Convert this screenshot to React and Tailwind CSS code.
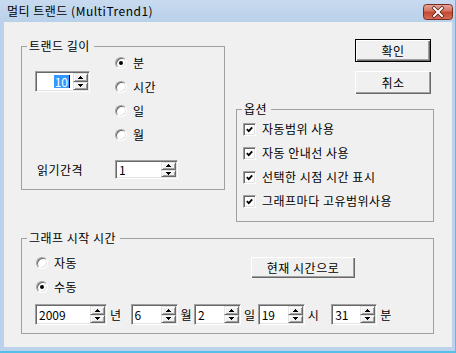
import React from "react";

const font = "font-['Noto_Sans_CJK_KR','Noto_Sans',sans-serif]";

// tiny pixel arrows for the up-down buttons
const Arrow = ({ up }) => (
  <svg width="5" height="3" shapeRendering="crispEdges">
    {up ? (
      <>
        <rect x="2" y="0" width="1" height="1" fill="#000" />
        <rect x="1" y="1" width="3" height="1" fill="#000" />
        <rect x="0" y="2" width="5" height="1" fill="#000" />
      </>
    ) : (
      <>
        <rect x="0" y="0" width="5" height="1" fill="#000" />
        <rect x="1" y="1" width="3" height="1" fill="#000" />
        <rect x="2" y="2" width="1" height="1" fill="#000" />
      </>
    )}
  </svg>
);

const SpinHalf = ({ up }) => (
  <div className="flex-1 flex items-center justify-center bg-[#f0f0f0] border border-t-[#e3e3e3] border-l-[#e3e3e3] border-b-[#696969] border-r-[#696969] shadow-[inset_1px_1px_0_#fff,inset_-1px_-1px_0_#a0a0a0]">
    <Arrow up={up} />
  </div>
);

const Spinner = ({ value, selected, className }) => (
  <div
    className={`flex bg-white border border-t-[#a0a0a0] border-l-[#a0a0a0] border-b-white border-r-white shadow-[inset_1px_1px_0_#696969,inset_-1px_-1px_0_#e3e3e3] p-px tracking-normal ${className}`}
  >
    {selected ? (
      <div className="flex-1 flex items-center justify-end pr-[3px] leading-[13px]">
        <span className="bg-[#3399ff] text-white px-px">{value}</span>
        <span className="w-px h-[13px] bg-black" />
      </div>
    ) : (
      <div className="flex-1 flex items-center pl-[2px] leading-none">{value}</div>
    )}
    <div className="flex flex-col w-[15px]">
      <SpinHalf up />
      <SpinHalf />
    </div>
  </div>
);

const Radio = ({ checked, label }) => (
  <div className="flex items-center h-[20px]">
    <span className="flex items-center justify-center w-[12px] h-[12px] rounded-full bg-white border border-t-[#a0a0a0] border-l-[#a0a0a0] border-b-white border-r-white shadow-[inset_1px_1px_0_#696969,inset_-1px_-1px_0_#e3e3e3]">
      {checked && <span className="w-[4px] h-[4px] rounded-full bg-black" />}
    </span>
    <span className="ml-[6px] leading-none">{label}</span>
  </div>
);

const Check = ({ label }) => (
  <div className="flex items-center h-[20px]">
    <span className="flex items-center justify-center w-[13px] h-[13px] bg-white border border-t-[#a0a0a0] border-l-[#a0a0a0] border-b-white border-r-white shadow-[inset_1px_1px_0_#696969,inset_-1px_-1px_0_#e3e3e3]">
      <svg width="7" height="7" viewBox="0 0 7 7">
        <path d="M0.8 3.2 L2.8 5.2 L6.2 1.4" fill="none" stroke="#000" strokeWidth="1.8" />
      </svg>
    </span>
    <span className="ml-[6px] leading-none">{label}</span>
  </div>
);

const Button = ({ children, def, className }) =>
  def ? (
    <div className={`border border-black ${className}`}>
      <div className="h-full flex items-center justify-center bg-[#f0f0f0] shadow-[inset_1px_1px_0_#fff,inset_-1px_-1px_0_#696969,inset_-2px_-2px_0_#a0a0a0]">
        {children}
      </div>
    </div>
  ) : (
    <div
      className={`flex items-center justify-center bg-[#f0f0f0] shadow-[inset_1px_1px_0_#fff,inset_-1px_-1px_0_#696969,inset_-2px_-2px_0_#a0a0a0] ${className}`}
    >
      {children}
    </div>
  );

const Group = ({ title, className, children }) => (
  <fieldset className={`border border-[#a0a0a0] ${className}`}>
    <legend className="ml-[5px] pl-[2px] pr-[4px] leading-[14px]">{title}</legend>
    {children}
  </fieldset>
);

const CloseBtn = () => (
  <svg width="30" height="16" viewBox="0 0 30 16" className="mt-[2px]">
    <defs>
      <linearGradient id="cg" x1="0" y1="0" x2="0" y2="1">
        <stop offset="0" stopColor="#e8a89c" />
        <stop offset="0.45" stopColor="#d4725f" />
        <stop offset="0.5" stopColor="#c4452f" />
        <stop offset="1" stopColor="#d8705a" />
      </linearGradient>
    </defs>
    <rect x="0.5" y="0.5" width="29" height="15" rx="3" fill="url(#cg)" stroke="#7a2c22" />
    <path d="M11 4 L19 12 M19 4 L11 12" stroke="#4a1a14" strokeWidth="3.4" strokeLinecap="square" />
    <path d="M11 4 L19 12 M19 4 L11 12" stroke="#fff" strokeWidth="2" strokeLinecap="square" />
  </svg>
);

export default function App() {
  return (
    <div
      className={`w-[456px] h-[353px] flex flex-col bg-[#bcd2ec] border-r border-b-2 border-r-[#55bfe9] border-b-[#55bfe9] text-[12px] tracking-[0.5px] text-black ${font}`}
    >
      {/* TITLE BAR */}
      <div className="h-[22px] flex items-center pl-[7px] pr-[2px] bg-gradient-to-b from-[#c8daef] to-[#b9d1ea]">
        <span className="flex-1 leading-none">멀티 트랜드 (MultiTrend1)</span>
        <CloseBtn />
      </div>

      {/* DIALOG BODY */}
      <div className="flex-1 ml-[4px] mr-[3px] mb-[4px] bg-[#f0f0f0] pl-[17px] pt-[17px]">
        <div className="flex items-start">
          <Group title="트랜드 길이" className="w-[204px] h-[151px]">
            <div className="flex pl-[13px]">
              <div className="w-[80px] pt-[18px]">
                <Spinner selected value="10" className="w-[55px] h-[21px]" />
              </div>
              <div className="flex flex-col gap-[4px]">
                <Radio checked label="분" />
                <Radio label="시간" />
                <Radio label="일" />
                <Radio label="월" />
              </div>
            </div>
            <div className="flex items-center pl-[13px] mt-[15px]">
              <span className="w-[80px] pl-[2px] leading-none">읽기간격</span>
              <Spinner value="1" className="w-[63px] h-[19px]" />
            </div>
          </Group>

          <div className="ml-[11px] w-[198px] flex flex-col">
            <Button def className="self-end mr-[3px] w-[76px] h-[23px]">
              확인
            </Button>
            <Button className="self-end mr-[3px] mt-[9px] w-[76px] h-[23px]">취소</Button>
            <Group title="옵션" className="mt-[8px] w-[198px] h-[120px]">
              <div className="flex flex-col gap-[4px] pl-[6px] pt-[3px]">
                <Check label="자동범위 사용" />
                <Check label="자동 안내선 사용" />
                <Check label="선택한 시점 시간 표시" />
                <Check label="그래프마다 고유범위사용" />
              </div>
            </Group>
          </div>
        </div>

        <Group title="그래프 시작 시간" className="mt-[9px] w-[413px] h-[103px]">
          <div className="flex pl-[14px] pt-[8px]">
            <div className="w-[215px] flex flex-col gap-[4px]">
              <Radio label="자동" />
              <Radio checked label="수동" />
            </div>
            <Button className="mt-[4px] w-[104px] h-[21px]">현재 시간으로</Button>
          </div>
          <div className="flex items-center pl-[13px] mt-[7px]">
            <Spinner value="2009" className="w-[72px] h-[21px]" />
            <span className="ml-[3px] leading-none">년</span>
            <Spinner value="6" className="ml-[9px] w-[47px] h-[21px]" />
            <span className="ml-[3px] leading-none">월</span>
            <Spinner value="2" className="ml-[2px] w-[47px] h-[21px]" />
            <span className="ml-[3px] leading-none">일</span>
            <Spinner value="19" className="ml-[2px] w-[47px] h-[21px]" />
            <span className="ml-[3px] leading-none">시</span>
            <Spinner value="31" className="ml-[12px] w-[46px] h-[21px]" />
            <span className="ml-[3px] leading-none">분</span>
          </div>
        </Group>
      </div>
    </div>
  );
}
